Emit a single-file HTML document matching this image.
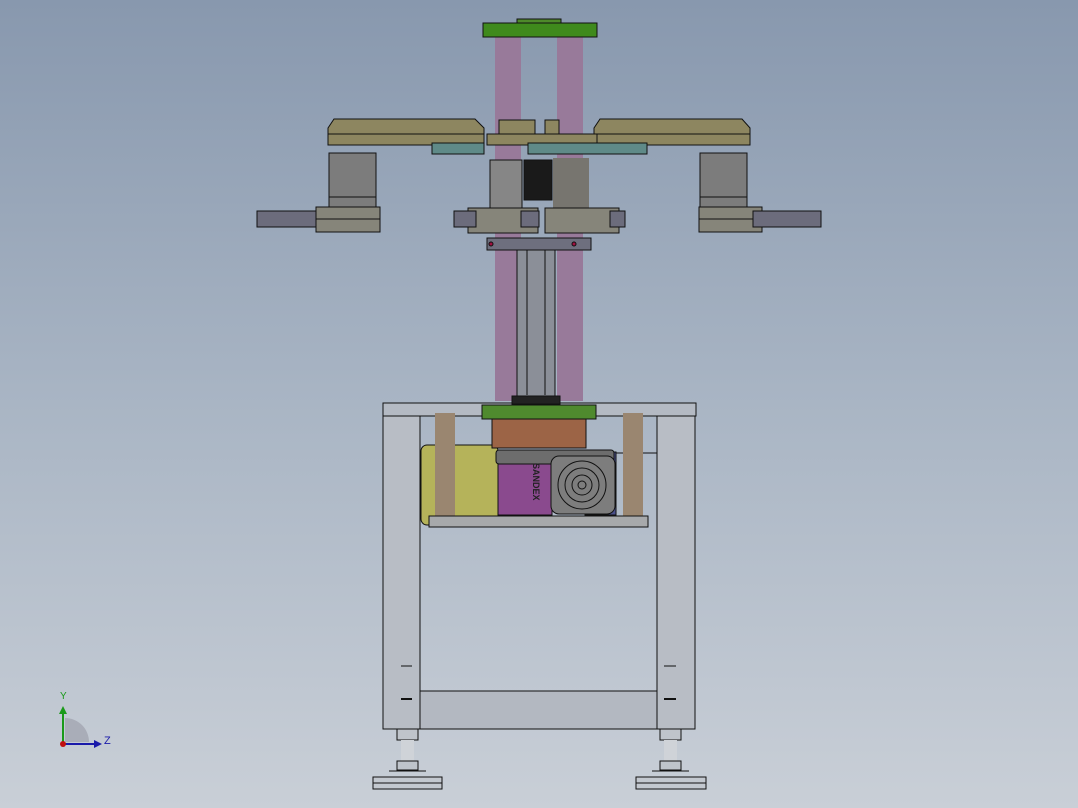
<!DOCTYPE html>
<html><head><style>html,body{margin:0;padding:0;width:1078px;height:808px;overflow:hidden}
body{background:linear-gradient(#8898ae,#a9b5c4 50%,#c9cfd7)}svg{display:block}</style></head><body>
<svg width="1078" height="808" viewBox="0 0 1078 808" stroke="#111" stroke-width="1">
<!-- frame -->
<rect x="383" y="403" width="313" height="13" fill="#b4bac3"/>
<rect x="383" y="416" width="37" height="313" fill="#b8bdc5"/>
<rect x="657" y="416" width="38" height="313" fill="#b8bdc5"/>
<rect x="420" y="691" width="237" height="38" fill="#b3b8c1"/>
<line x1="420" y1="453" x2="657" y2="453"/>
<line x1="401" y1="666" x2="412" y2="666"/><line x1="401" y1="699" x2="412" y2="699" stroke-width="2"/>
<line x1="664" y1="666" x2="676" y2="666"/><line x1="664" y1="699" x2="676" y2="699" stroke-width="2"/>
<!-- feet -->
<g fill="#bfc4cb">
<rect x="397" y="729" width="21" height="11"/><rect x="401" y="740" width="13" height="21" fill="#cfd3d8" stroke="none"/><rect x="397" y="761" width="21" height="9"/>
<line x1="389" y1="771" x2="426" y2="771"/>
<rect x="373" y="777" width="69" height="12" fill="#c3c8cf"/>
<line x1="373" y1="783" x2="442" y2="783"/>
<rect x="660" y="729" width="21" height="11"/><rect x="664" y="740" width="13" height="21" fill="#cfd3d8" stroke="none"/><rect x="660" y="761" width="21" height="9"/>
<line x1="652" y1="771" x2="689" y2="771"/>
<rect x="636" y="777" width="70" height="12" fill="#c3c8cf"/>
<line x1="636" y1="783" x2="706" y2="783"/>
</g>
<!-- lower drive -->
<rect x="421" y="445" width="77" height="80" rx="6" fill="#b5b35a"/>
<rect x="435" y="413" width="20" height="104" fill="#9a8670" stroke="none"/>
<rect x="623" y="413" width="20" height="104" fill="#9a8670" stroke="none"/>
<rect x="585" y="452" width="31" height="63" fill="#4a4f8a"/>
<rect x="498" y="455" width="54" height="60" fill="#8a4a8e"/>
<rect x="496" y="450" width="118" height="14" rx="3" fill="#6d6d6d"/>
<rect x="551" y="456" width="64" height="58" rx="8" fill="#7d7d7d"/>
<g fill="none"><circle cx="582" cy="485" r="24"/><circle cx="582" cy="485" r="17"/><circle cx="582" cy="485" r="10"/><circle cx="582" cy="485" r="4"/></g>
<text x="515" y="489" transform="rotate(90 537 485)" font-family="Liberation Sans,sans-serif" font-size="9" font-weight="bold" fill="#222" stroke="none">SANDEX</text>
<rect x="429" y="516" width="219" height="11" fill="#a7a9ab"/>
<rect x="492" y="419" width="94" height="29" fill="#9c6446"/>
<rect x="482" y="405" width="114" height="14" fill="#4f8a2e"/>
<!-- rods -->
<rect x="495" y="37" width="26" height="364" fill="#987a9a" stroke="none"/>
<rect x="557" y="37" width="26" height="364" fill="#987a9a" stroke="none"/>
<!-- center column -->
<rect x="517" y="250" width="38" height="150" fill="#8b8f98"/>
<line x1="527" y1="250" x2="527" y2="395"/><line x1="545" y1="250" x2="545" y2="395"/>
<rect x="512" y="396" width="48" height="8" fill="#222"/>
<rect x="490" y="160" width="32" height="48" fill="#868686"/>
<rect x="524" y="160" width="28" height="40" fill="#1a1a1a"/>
<rect x="553" y="158" width="36" height="60" fill="#77756f" stroke="none"/>
<!-- top -->
<rect x="517" y="19" width="44" height="4" fill="#4e8a2a"/>
<rect x="483" y="23" width="114" height="14" fill="#3f8a1c"/>
<!-- arms -->
<path d="M334 119H475L484 128V145H328V128Z" fill="#8d8660"/>
<path d="M600 119H742L750 128V145H594V128Z" fill="#8d8660"/>
<line x1="328" y1="134" x2="484" y2="134"/><line x1="594" y1="134" x2="750" y2="134"/>
<rect x="487" y="134" width="110" height="11" fill="#8d8660"/>
<rect x="499" y="120" width="36" height="14" fill="#8d8660"/>
<rect x="545" y="120" width="14" height="14" fill="#8d8660"/>
<rect x="432" y="143" width="52" height="11" fill="#5f8a88"/>
<rect x="528" y="143" width="119" height="11" fill="#5f8a88"/>
<!-- motors -->
<rect x="329" y="153" width="47" height="44" fill="#7c7c7c"/>
<rect x="329" y="197" width="47" height="10" fill="#7c7c7c"/>
<rect x="700" y="153" width="47" height="44" fill="#7c7c7c"/>
<rect x="700" y="197" width="47" height="10" fill="#7c7c7c"/>
<!-- grippers -->
<rect x="316" y="207" width="64" height="25" fill="#86857a"/>
<line x1="316" y1="219" x2="380" y2="219"/>
<rect x="257" y="211" width="59" height="16" fill="#6c6c7c"/>
<rect x="699" y="207" width="63" height="25" fill="#86857a"/>
<line x1="699" y1="219" x2="762" y2="219"/>
<rect x="753" y="211" width="68" height="16" fill="#6c6c7c"/>
<rect x="468" y="208" width="70" height="25" fill="#86857a"/>
<rect x="454" y="211" width="22" height="16" fill="#6c6c7c"/>
<rect x="521" y="211" width="18" height="16" fill="#6c6c7c"/>
<rect x="545" y="208" width="74" height="25" fill="#86857a"/>
<rect x="610" y="211" width="15" height="16" fill="#6c6c7c"/>
<rect x="487" y="238" width="104" height="12" fill="#6e6f7e"/>
<circle cx="491" cy="244" r="2" fill="#a01040"/><circle cx="574" cy="244" r="2" fill="#a01040"/>
<!-- triad -->
<g stroke-width="2">
<line x1="63" y1="744" x2="63" y2="712" stroke="#1a9a1a"/><path d="M59 714L63 706L67 714Z" fill="#1a9a1a" stroke="none"/>
<line x1="63" y1="744" x2="96" y2="744" stroke="#1a1aaa"/><path d="M94 740L102 744L94 748Z" fill="#1a1aaa" stroke="none"/>
</g>
<path d="M65 742V718A24 24 0 0 1 89 742Z" fill="#a9adb8" stroke="none"/>
<circle cx="63" cy="744" r="3" fill="#c01010" stroke="none"/>
<text x="60" y="699" font-family="Liberation Sans,sans-serif" font-size="10" fill="#1a9a1a" stroke="none">Y</text>
<text x="104" y="744" font-family="Liberation Sans,sans-serif" font-size="11" fill="#1a1aaa" stroke="none">Z</text>
</svg>
</body></html>
